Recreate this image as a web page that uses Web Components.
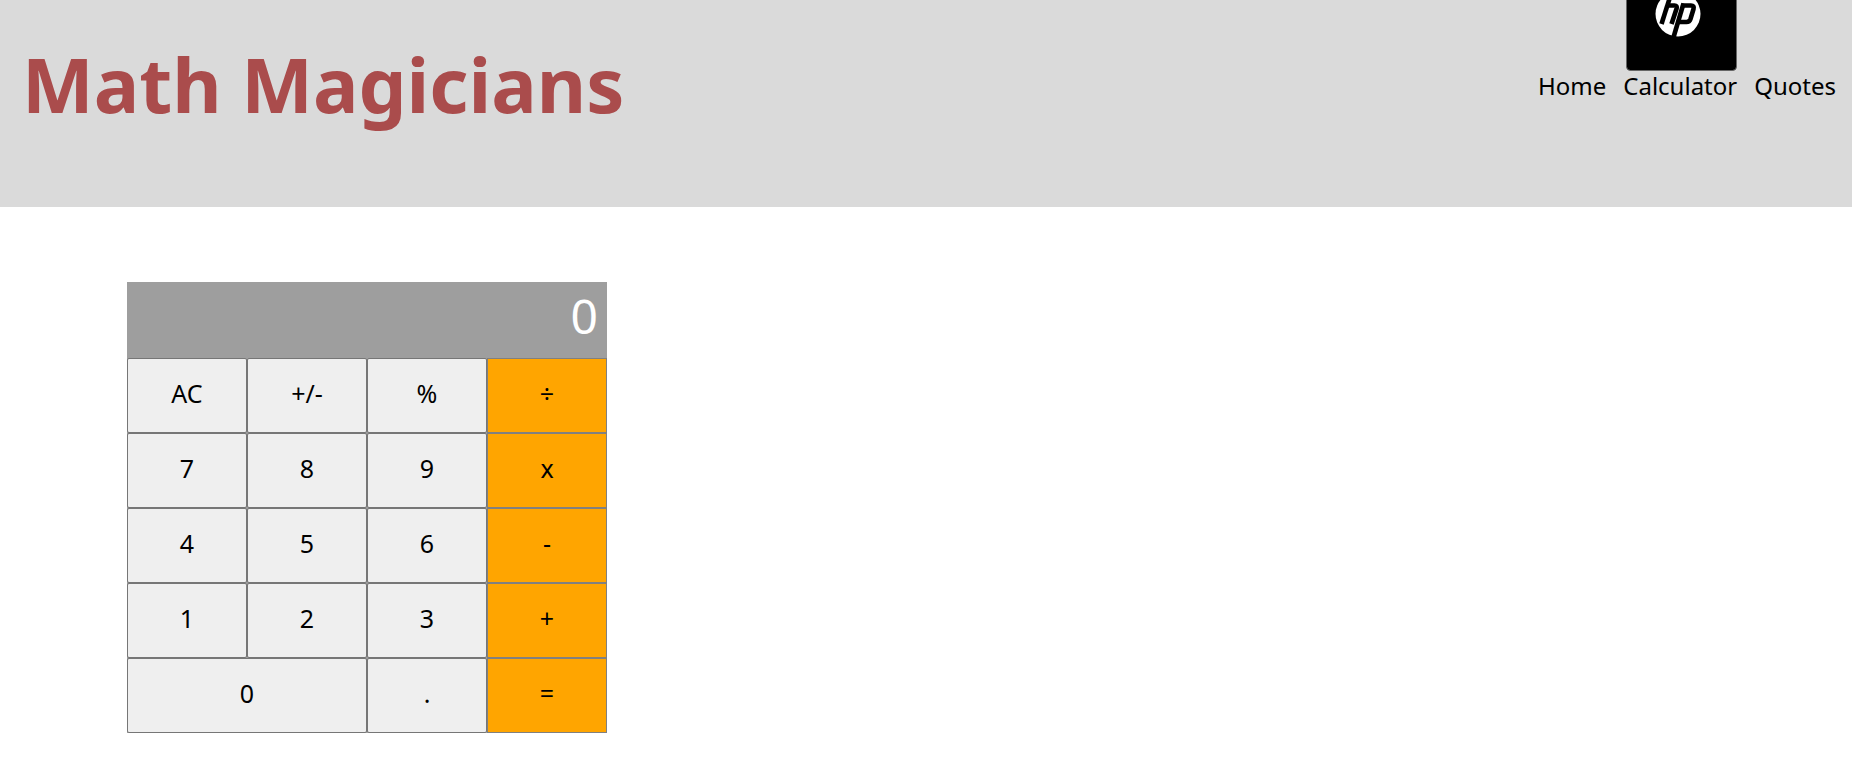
<!DOCTYPE html>
<html lang="en">
<head>
<meta charset="utf-8">
<title>Math Magicians</title>
<style>
  body { margin: 0; background: #fff; color: #000; font-family: "Noto Sans", "Open Sans", sans-serif; }
</style>
</head>
<body>
<math-app></math-app>

<template id="app-template">
  <style>
    :host { display: block; }
    main { padding: 75px 127px 27px; }
  </style>
  <site-header>
    Math Magicians
    <nav-link slot="nav" href="#home">Home</nav-link>
    <nav-link slot="nav" href="#calculator">Calculator<brand-badge slot="badge"></brand-badge></nav-link>
    <nav-link slot="nav" href="#quotes">Quotes</nav-link>
  </site-header>
  <main><calc-pad></calc-pad></main>
</template>

<template id="header-template">
  <style>
    :host { display: block; background: #dadada; }
    header { display: flex; justify-content: space-between; align-items: flex-start; padding: 32px 16px 71px 22px; }
    h1 { margin: 0; color: #aa4c4c; font-size: 76px; line-height: 104px; font-weight: 700; }
    nav { display: flex; gap: 17px; padding-top: 38px; }
  </style>
  <header>
    <h1><slot></slot></h1>
    <nav aria-label="Main"><slot name="nav"></slot></nav>
  </header>
</template>

<template id="link-template">
  <style>
    :host { display: block; position: relative; }
    a { display: block; color: #000; text-decoration: none; font-size: 24px; line-height: 32px; }
  </style>
  <a><slot></slot></a><slot name="badge"></slot>
</template>

<template id="badge-template">
  <style>
    :host { display: block; position: absolute; right: 0; bottom: 31px; }
    svg { display: block; }
  </style>
  <svg width="111" height="71" viewBox="0 0 111 71" role="img" aria-label="Brand logo">
    <path d="M.5 -4H110.500V66.500Q110.500 70.500 106.500 70.500H4.500Q.5 70.500 .5 66.500Z" fill="#000" stroke="#666" stroke-width="1"/>
    <circle cx="52" cy="14" r="22.500" fill="#fff"/>
    <g fill="none" stroke="#000" stroke-width="4.600">
      <path d="M45 -6L35.500 24"/>
      <path d="M41 5.500H48.500Q51.500 5.500 50.600 8.500L45.500 24"/>
      <path d="M57.500 3.500L47 39"/>
      <path d="M56 5.500H65Q68.500 5.500 67.500 9L64.500 19Q63.500 22 60.500 22H53"/>
    </g>
  </svg>
</template>

<template id="pad-template">
  <style>
    :host { display: block; width: 100%; max-width: 480px; }
    output { display: block; box-sizing: border-box; height: 76px; padding: 0 9px; background: #9e9e9e; color: #fff; font-size: 48px; line-height: 68px; text-align: right; }
    .keys { display: grid; grid-template-columns: repeat(4, 1fr); grid-auto-rows: 75px; }
  </style>
  <output aria-label="Result">0</output>
  <div class="keys"></div>
</template>

<template id="key-template">
  <style>
    :host { display: grid; background: #9e9e9e; }
    :host([wide]) { grid-column: span 2; }
    button { margin: 0; padding: 0 0 6px; border: 1px solid #767676; border-radius: 2px; background: #efefef; color: #000; font-family: inherit; font-size: 25px; line-height: 32px; }
    :host([operator]) button { border-color: #808080; border-radius: 0; background: #ffa500; }
  </style>
  <button type="button"><slot></slot></button>
</template>

<script>
  class TemplateElement extends HTMLElement {
    constructor() {
      super();
      this.attachShadow({ mode: "open" });
      const template = document.getElementById(this.constructor.template);
      this.shadowRoot.append(template.content.cloneNode(true));
    }
  }

  customElements.define("nav-link", class extends TemplateElement {
    static template = "link-template";
    connectedCallback() {
      this.shadowRoot.querySelector("a").href = this.getAttribute("href");
    }
  });
  customElements.define("brand-badge", class extends TemplateElement {
    static template = "badge-template";
  });
  customElements.define("site-header", class extends TemplateElement {
    static template = "header-template";
  });
  customElements.define("calc-key", class extends TemplateElement {
    static template = "key-template";
  });
  customElements.define("calc-pad", class extends TemplateElement {
    static template = "pad-template";
    connectedCallback() {
      const keys = this.shadowRoot.querySelector(".keys");
      if (keys.childElementCount) return;
      const labels = ["AC", "+/-", "%", "÷", "7", "8", "9", "x", "4", "5", "6", "-", "1", "2", "3", "+", "0", ".", "="];
      for (const label of labels) {
        const key = document.createElement("calc-key");
        key.textContent = label;
        key.toggleAttribute("wide", label === "0");
        key.toggleAttribute("operator", "÷x-+=".includes(label));
        keys.append(key);
      }
    }
  });
  customElements.define("math-app", class extends TemplateElement {
    static template = "app-template";
  });
</script>
</body>
</html>
